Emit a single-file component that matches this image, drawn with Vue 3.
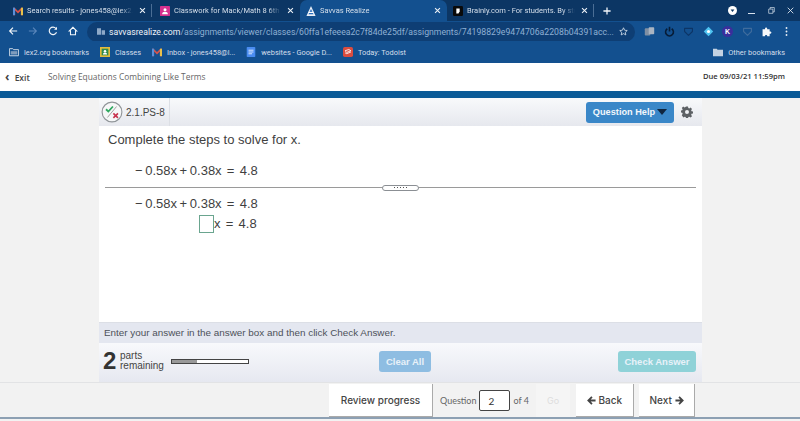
<script setup>
const bookmarks = [
  { icon: 'folder', label: 'lex2.org bookmarks' },
  { icon: 'classes', label: 'Classes' },
  { icon: 'gmail', label: 'Inbox - jones458@l...' },
  { icon: 'docs', label: 'websites - Google D...' },
  { icon: 'todoist', label: 'Today: Todoist' }
]
</script>

<template>
  <div class="page">
    <div class="tabs">
      <div class="tab tab-one">
        <svg class="fav" viewBox="0 0 12 10"><path d="M0 1h2l4 4 4-4h2v9H9.500V4.500L6 8 2.500 4.500V10H0z" fill="#d9534a" /><path d="M0 1h2.500v9H0z" fill="#5a8fd8" /><path d="M9.500 1H12v9H9.500z" fill="#e8c04a" /></svg>
        <span class="tab-title">Search results - jones458@lex2.o</span>
        <svg class="tab-x" viewBox="0 0 10 10"><path d="M1.500 1.500l7 7M8.500 1.500l-7 7" stroke="#eef3f8" stroke-width="1.500" /></svg>
      </div>
      <div class="tab-sep"></div>
      <div class="tab tab-two">
        <svg class="fav" viewBox="0 0 12 12"><rect width="12" height="12" rx="1" fill="#d6318f" /><circle cx="6" cy="4.500" r="1.800" fill="#fff" /><path d="M2.500 10c0-2 1.500-3 3.500-3s3.500 1 3.500 3z" fill="#fff" /></svg>
        <span class="tab-title">Classwork for Mack/Math 8 6th (</span>
        <svg class="tab-x" viewBox="0 0 10 10"><path d="M1.500 1.500l7 7M8.500 1.500l-7 7" stroke="#eef3f8" stroke-width="1.500" /></svg>
      </div>
      <div class="tab tab-active">
        <svg class="fav" viewBox="0 0 12 12"><path d="M6 0l5.500 12H.5z" fill="#e8eef6" /><path d="M6 3.500L9 10H3z" fill="#2a6fc0" /><rect x="3" y="7" width="6" height="1.400" fill="#fff" /></svg>
        <span class="tab-title">Savvas Realize</span>
        <svg class="tab-x" viewBox="0 0 10 10"><path d="M1.500 1.500l7 7M8.500 1.500l-7 7" stroke="#eef3f8" stroke-width="1.500" /></svg>
      </div>
      <div class="tab tab-four">
        <svg class="fav" viewBox="0 0 12 12"><rect width="12" height="12" rx="1.500" fill="#0a0a0a" /><path d="M4 3h4v3.500L6.500 9H4z" fill="#fff" /></svg>
        <span class="tab-title">Brainly.com - For students. By stu</span>
        <svg class="tab-x" viewBox="0 0 10 10"><path d="M1.500 1.500l7 7M8.500 1.500l-7 7" stroke="#eef3f8" stroke-width="1.500" /></svg>
      </div>
      <div class="tab-sep"></div>
      <svg class="tab-plus" viewBox="0 0 10 10"><path d="M5 .5v9M.5 5h9" stroke="#f2f6fa" stroke-width="1.600" /></svg>
      <div class="win-controls">
        <svg class="win-badge" viewBox="0 0 12 12"><circle cx="6" cy="6" r="6" fill="#fff" /><path d="M3.500 4.500h5L6 8z" fill="#0b3561" /></svg>
        <span class="win-min"></span>
        <svg class="win-restore" viewBox="0 0 10 10"><path d="M3 3V.8h6V7H7M1 3h6v6H1z" fill="none" stroke="#d8e2ee" stroke-width="1" /></svg>
        <svg class="win-close" viewBox="0 0 10 10"><path d="M1 1l8 8M9 1l-8 8" stroke="#e8eef6" stroke-width="1.200" /></svg>
      </div>
    </div>

    <div class="toolbar">
      <svg class="nav-icon" viewBox="0 0 12 12"><path d="M11 6H2M6 2L2 6l4 4" fill="none" stroke="#f2f6fa" stroke-width="1.400" /></svg>
      <svg class="nav-icon" viewBox="0 0 12 12"><path d="M1 6h9M6 2l4 4-4 4" fill="none" stroke="#5a86bb" stroke-width="1.400" /></svg>
      <svg class="nav-icon" viewBox="0 0 12 12"><path d="M10.200 7.500A4.500 4.500 0 1 1 9.500 3" fill="none" stroke="#f2f6fa" stroke-width="1.400" /><path d="M10.800 1v3.500H7.300z" fill="#f2f6fa" /></svg>
      <svg class="nav-icon" viewBox="0 0 12 12"><path d="M6 1.500L1.500 6H3v4.500h6V6h1.500z" fill="none" stroke="#f2f6fa" stroke-width="1.300" /></svg>
      <div class="omnibox">
        <svg class="site-icon" viewBox="0 0 12 10"><path d="M0 0h6v10H0zM7 3h5v7H7z" fill="#8ea9c8" /></svg>
        <span class="url"><span class="url-host">savvasrealize.com</span>/assignments/viewer/classes/60ffa1efeeea2c7f84de25df/assignments/74198829e9474706a2208b04391acc...</span>
        <svg class="star" viewBox="0 0 12 12"><path d="M6 1l1.500 3.300 3.500.4-2.600 2.400.7 3.500L6 8.800l-3.100 1.800.7-3.500L1 4.700l3.500-.4z" fill="none" stroke="#e6edf5" stroke-width="1" /></svg>
      </div>
      <div class="extensions">
        <svg class="ext" viewBox="0 0 14 14"><rect x="1" y="3" width="7" height="9" rx="1" fill="#7f8fa3" /><rect x="6" y="1.500" width="7" height="9" rx="1" fill="#a9b4c2" /></svg>
        <svg class="ext" viewBox="0 0 14 14"><path d="M4.200 3.500a5 5 0 1 0 5.600 0" fill="none" stroke="#071c36" stroke-width="2" /><path d="M7 1v6" stroke="#071c36" stroke-width="2" /></svg>
        <svg class="ext" viewBox="0 0 14 14"><path d="M2 3h10v4l-5 5-5-5z" fill="none" stroke="#0d3566" stroke-width="1.400" stroke-linejoin="round" /></svg>
        <svg class="ext" viewBox="0 0 14 14"><path d="M7 1l6 6-6 6-6-6z" fill="#4fc3f0" /><circle cx="7" cy="7" r="2" fill="#fff" /></svg>
        <span class="ext-k">K</span>
        <svg class="ext" viewBox="0 0 14 14"><path d="M2 3h10v4l-5 5-5-5z" fill="none" stroke="#3f6c9d" stroke-width="1.400" stroke-linejoin="round" /></svg>
        <svg class="ext" viewBox="0 0 14 14"><path d="M2 4h3c0-3 3-3 3 0h3v3c3 0 3 3 0 3v3H8c0-2-3-2-3 0H2z" fill="#f4f7fa" /></svg>
        <svg class="ext" viewBox="0 0 14 14"><circle cx="7" cy="2.500" r="1.200" fill="#e8eef6" /><circle cx="7" cy="7" r="1.200" fill="#e8eef6" /><circle cx="7" cy="11.500" r="1.200" fill="#e8eef6" /></svg>
      </div>
    </div>

    <div class="bookmarks">
      <div v-for="b in bookmarks" :key="b.label" class="bookmark">
        <svg v-if="b.icon === 'folder'" class="bm-icon" viewBox="0 0 12 10"><path d="M.5 1h4l1 1.200h6v7.300H.5z" fill="none" stroke="#c4d2e2" stroke-width="1.200" /><rect x="2" y="4" width="8" height="4" fill="#7f9cbd" /></svg>
        <svg v-else-if="b.icon === 'classes'" class="bm-icon" viewBox="0 0 12 12"><rect width="12" height="12" fill="#e2bb3c" /><rect x="2" y="2" width="8" height="8" fill="#2f8a4f" /><circle cx="6" cy="5" r="1.500" fill="#fff" /><path d="M3.500 9c0-1.500 1-2 2.500-2s2.500.5 2.500 2z" fill="#fff" /></svg>
        <svg v-else-if="b.icon === 'gmail'" class="bm-icon" viewBox="0 0 12 10"><path d="M0 1h2l4 4 4-4h2v9H9.500V4.500L6 8 2.500 4.500V10H0z" fill="#d9534a" /><path d="M0 1h2.500v9H0z" fill="#5a8fd8" /><path d="M9.500 1H12v9H9.500z" fill="#e8c04a" /></svg>
        <svg v-else-if="b.icon === 'docs'" class="bm-icon" viewBox="0 0 12 14"><rect width="12" height="14" rx="1" fill="#4a8cf0" /><path d="M2.500 4.500h7M2.500 7h7M2.500 9.500h5" stroke="#fff" stroke-width="1.100" /></svg>
        <svg v-else class="bm-icon" viewBox="0 0 12 12"><rect width="12" height="12" rx="2" fill="#db4c3f" /><path d="M2.500 4.500L7 3l2.500 1.500-5 2zM2.500 7l2 1 5-2" fill="none" stroke="#fff" stroke-width="1" /></svg>
        <span>{{ b.label }}</span>
      </div>
      <div class="other-bookmarks">
        <svg class="bm-icon" viewBox="0 0 12 10"><path d="M0 1h4.500l1 1.200H12V10H0z" fill="#c4d2e2" /></svg>
        <span>Other bookmarks</span>
      </div>
    </div>

    <header class="app-header">
      <span class="exit"><span class="chev">‹</span> Exit</span>
      <span class="lesson">Solving Equations Combining Like Terms</span>
      <span class="due">Due 09/03/21 11:59pm</span>
    </header>
    <div class="blue-bar"></div>

    <main class="stage">
      <section class="panel">
        <div class="panel-head">
          <div class="item-id">
            <svg class="score" viewBox="0 0 24 24">
              <circle cx="12" cy="12" r="10.800" fill="#f6f7f8" stroke="#8f9498" stroke-width="1.200" />
              <path d="M5.500 9l2.500 2.500 5-5.500" fill="none" stroke="#2fa860" stroke-width="2" />
              <path d="M7 18L17 6" stroke="#9a9a9a" stroke-width="1" />
              <path d="M13.500 13.500l5 5M18.500 13.500l-5 5" stroke="#c8344f" stroke-width="1.800" />
            </svg>
            <span>2.1.PS-8</span>
          </div>
          <div class="head-actions">
            <button class="help">Question Help<span class="caret"></span></button>
            <svg class="gear" viewBox="0 0 24 24"><path fill="#5d6165" d="M10 1h4l.6 3 2 .8 2.600-1.700 2.800 2.800-1.700 2.600.8 2 3 .6v4l-3 .6-.8 2 1.700 2.600-2.800 2.800-2.600-1.700-2 .8-.6 3h-4l-.6-3-2-.8-2.600 1.700L1.600 18.300l1.700-2.600-.8-2-3-.6v-4l3-.6.8-2L1.600 3.900l2.800-2.800L7 2.800l2-.8zM12 8a4 4 0 1 0 0 8 4 4 0 0 0 0-8z" /></svg>
          </div>
        </div>

        <div class="question">
          <p class="prompt">Complete the steps to solve for x.</p>
          <div class="eq eq-top">− 0.58x + 0.38x &nbsp;= &nbsp;4.8</div>
          <div class="divider"><span class="grip"><i v-for="n in 5" :key="n"></i></span></div>
          <div class="eq eq-first">− 0.58x + 0.38x &nbsp;= &nbsp;4.8</div>
          <div class="eq eq-answer"><span class="answer-box"></span><span>x &nbsp;= &nbsp;4.8</span></div>
        </div>

        <div class="hint">Enter your answer in the answer box and then click Check Answer.</div>

        <div class="parts">
          <div class="remaining">
            <span class="count">2</span>
            <span class="parts-label">parts<br />remaining</span>
            <span class="progress"><span class="progress-fill"></span></span>
          </div>
          <button class="clear">Clear All</button>
          <button class="check">Check Answer</button>
        </div>
      </section>
    </main>

    <footer class="footer">
      <button class="foot-btn review">Review progress</button>
      <div class="jump">
        <span>Question</span>
        <span class="q-input">2</span>
        <span>of 4</span>
      </div>
      <button class="foot-btn go">Go</button>
      <button class="foot-btn back">
        <svg class="arrow" viewBox="0 0 10 10"><path d="M9.500 5H2M5.500 1L1.500 5l4 4" fill="none" stroke="#444" stroke-width="2" /></svg>
        Back
      </button>
      <button class="foot-btn next">
        Next
        <svg class="arrow" viewBox="0 0 10 10"><path d="M.5 5H8M4.500 1l4 4-4 4" fill="none" stroke="#444" stroke-width="2" /></svg>
      </button>
    </footer>
  </div>
</template>

<style scoped>
.page {
  width: 800px;
  height: 421px;
  display: flex;
  flex-direction: column;
  overflow: hidden;
  background: #f2f2f2;
  font-family: "Liberation Sans", Arial, sans-serif;
}

/* browser chrome */
.tabs {
  height: 21px;
  display: flex;
  align-items: center;
  background: #0c3664;
  color: #d5dfeb;
  font: 7.500px Roboto, sans-serif;
}
.tab {
  height: 21px;
  display: flex;
  align-items: center;
  padding: 0 6px 0 13px;
  box-sizing: border-box;
}
.tab-one { width: 152px; }
.tab-two { width: 148px; padding-left: 8px; }
.tab-active {
  width: 147px;
  background: #13508f;
  border-radius: 7px 7px 0 0;
  padding-left: 6px;
}
.tab-four { width: 147px; padding-left: 6px; }
.fav {
  width: 10px;
  height: 10px;
  flex: none;
  margin-right: 4px;
}
.tab-title {
  flex: 1;
  white-space: nowrap;
  overflow: hidden;
  -webkit-mask-image: linear-gradient(90deg, #000 88%, transparent);
  mask-image: linear-gradient(90deg, #000 88%, transparent);
}
.tab-x {
  width: 7px;
  height: 7px;
  flex: none;
  margin-left: 6px;
}
.tab-sep {
  width: 1px;
  height: 13px;
  flex: none;
  margin-left: -1px;
  background: #4b6e95;
}
.tab-plus {
  width: 8px;
  height: 8px;
  flex: none;
  margin-left: 9px;
}
.win-controls {
  margin-left: auto;
  display: flex;
  align-items: center;
  padding-right: 6px;
}
.win-badge { width: 9px; height: 9px; }
.win-min { width: 7px; height: 1px; margin: 5px 0 0 11px; background: #d8e2ee; }
.win-restore { width: 7px; height: 7px; margin-left: 13px; }
.win-close { width: 7px; height: 7px; margin-left: 12px; }

.toolbar {
  height: 20px;
  display: flex;
  align-items: center;
  background: #13508f;
  padding-left: 8px;
}
.nav-icon {
  width: 10px;
  height: 10px;
  flex: none;
  margin-right: 10px;
}
.omnibox {
  width: 548px;
  height: 20px;
  flex: none;
  box-sizing: border-box;
  margin-top: 1px;
  margin-left: -1px;
  display: flex;
  align-items: center;
  background: #0e3e74;
  border-radius: 10px;
  padding: 0 7px 0 10px;
  color: #8fb0d3;
  font: 8.700px Roboto, sans-serif;
}
.site-icon { width: 8px; height: 7px; margin-right: 4px; flex: none; }
.url { flex: 1; white-space: nowrap; overflow: hidden; }
.url-host { color: #eef3f8; }
.star { width: 9px; height: 9px; flex: none; }
.extensions {
  display: flex;
  align-items: center;
  gap: 8.500px;
  margin-left: 9px;
}
.ext { width: 11px; height: 11px; flex: none; }
.ext-k {
  width: 11px;
  height: 11px;
  flex: none;
  border-radius: 50%;
  background: #3a2f9c;
  color: #fff;
  font: bold 7px/11px "Liberation Sans", sans-serif;
  text-align: center;
}

.bookmarks {
  height: 22px;
  display: flex;
  align-items: center;
  background: #13508f;
  color: #d5dfeb;
  font: 7.400px Roboto, sans-serif;
  padding: 0 15px 0 9px;
  gap: 11px;
}
.bookmark, .other-bookmarks {
  display: flex;
  align-items: center;
  gap: 5px;
}
.other-bookmarks { margin-left: auto; }
.bm-icon { width: 10px; height: 10px; flex: none; }

/* app header */
.app-header {
  height: 28px;
  display: flex;
  align-items: center;
  padding: 0 15px 2px 5px;
  box-sizing: border-box;
  background: #fff;
  font: 8.500px "Open Sans", sans-serif;
  color: #555;
}
.exit { font-weight: 600; color: #444; width: 43px; }
.chev { font-size: 12px; font-weight: 700; margin-right: 3px; }
.lesson { color: #666; font-size: 8.400px; }
.due { margin-left: auto; font-weight: 600; color: #333; font-size: 7.600px; }
.blue-bar { height: 7px; background: #0a5a97; }

/* question panel */
.stage {
  height: 284px;
  padding-left: 99px;
  box-sizing: border-box;
}
.panel {
  width: 603px;
  height: 100%;
  display: flex;
  flex-direction: column;
  background: #fff;
}
.panel-head {
  height: 28px;
  flex: none;
  display: flex;
  justify-content: space-between;
  background: linear-gradient(#f8f9fb, #e6e8ee);
}
.item-id {
  display: flex;
  align-items: center;
  gap: 3px;
  padding: 0 4px 0 2px;
  border-right: 1px solid #dcdfe5;
  font-size: 10px;
  color: #444;
}
.score { width: 22px; height: 22px; }
.head-actions {
  display: flex;
  align-items: center;
  gap: 7px;
  padding-right: 9px;
}
.help {
  width: 88px;
  height: 21px;
  padding: 0;
  border: none;
  border-radius: 3px;
  background: #3a87c8;
  color: #f1f6fb;
  font: bold 9.200px "Liberation Sans", sans-serif;
}
.caret {
  display: inline-block;
  border: 5px solid transparent;
  border-top: 6px solid #10263f;
  border-bottom: none;
  margin-left: 2px;
}
.gear { width: 12px; height: 12px; }

.question {
  flex: 1;
  padding-top: 6px;
  color: #3f3f3f;
}
.prompt {
  margin: 0 0 0 9px;
  font-size: 13px;
  line-height: 16px;
}
.eq {
  font-size: 13px;
  line-height: 20px;
  padding-left: 36px;
  white-space: nowrap;
  word-spacing: -1px;
}
.eq-top { margin-top: 13px; }
.divider {
  height: 1px;
  margin: 6px 6px 0;
  background: #9a9a9a;
  display: flex;
  justify-content: center;
  align-items: center;
}
.grip {
  width: 37px;
  height: 6px;
  flex: none;
  box-sizing: border-box;
  border: 1px solid #8b8f94;
  border-radius: 3px;
  background: #fff;
  display: flex;
  justify-content: center;
  align-items: center;
  gap: 2px;
}
.grip i {
  width: 1px;
  height: 1px;
  background: #555;
}
.eq-first { margin-top: 6px; }
.eq-answer {
  display: flex;
  align-items: center;
  padding-left: 100px;
  height: 20px;
}
.answer-box {
  width: 15px;
  height: 18px;
  flex: none;
  box-sizing: border-box;
  border: 1px solid #6aa58f;
}

.hint {
  height: 21px;
  flex: none;
  box-sizing: border-box;
  padding-left: 5px;
  background: #e4e7f0;
  border-top: 1px solid #dcdfe6;
  color: #4c5159;
  font-size: 9.900px;
  line-height: 19px;
}
.parts {
  height: 39px;
  flex: none;
  box-sizing: border-box;
  display: flex;
  align-items: center;
  padding: 0 6px 3px 4px;
  background: linear-gradient(#f8f9fc, #e6e8f0);
}
.remaining {
  flex: 1;
  display: flex;
  align-items: center;
}
.count {
  font-size: 24px;
  font-weight: bold;
  color: #333;
  width: 17px;
}
.parts-label {
  font-size: 10px;
  line-height: 10px;
  color: #444;
  width: 51px;
}
.progress {
  width: 78px;
  height: 5px;
  box-sizing: border-box;
  border: 1px solid #444;
  background: #fff;
}
.progress-fill {
  display: block;
  width: 33%;
  height: 100%;
  background: #999;
}
.clear, .check {
  height: 21px;
  padding: 0;
  border: none;
  border-radius: 3px;
  color: #e8f1f8;
  font-weight: bold;
  font-family: "Liberation Sans", sans-serif;
  font-size: 9.500px;
}
.clear {
  width: 52px;
  margin-right: 187px;
  background: #8ebde2;
}
.check {
  width: 78px;
  background: #8fd2d8;
}

/* footer */
.footer {
  height: 37px;
  flex: none;
  box-sizing: border-box;
  display: flex;
  align-items: center;
  padding: 2px 0 2px 329px;
  background: #f2f2f2;
  border-top: 1px solid #e2e3e5;
  border-bottom: 2px solid #8da0b3;
  font-family: Lato, sans-serif;
}
.foot-btn {
  height: 33px;
  flex: none;
  padding: 0;
  border: none;
  background: #fff;
  border-right: 1px solid #aaa;
  border-bottom: 1px solid #aaa;
  color: #444;
  font: 500 10px Inter, sans-serif;
}
.review { width: 104px; }
.jump {
  display: flex;
  align-items: center;
  flex: none;
  margin-left: 7px;
  font-size: 9px;
  color: #666;
  width: 96px;
}
.q-input {
  width: 31px;
  height: 21px;
  box-sizing: border-box;
  margin: 0 3px 0 3px;
  padding-left: 8px;
  border: 1px solid #444;
  border-radius: 2px;
  background: #fff;
  color: #333;
  font-size: 10px;
  line-height: 20px;
}
.go {
  width: 34px;
  background: #f5f5f5;
  border: none;
  color: #ddd;
  font-size: 9px;
  font-weight: 400;
}
.back { width: 58px; margin-left: 6px; }
.next { width: 56px; margin-left: 5px; }
.arrow {
  width: 9px;
  height: 9px;
  vertical-align: -1px;
}
</style>
